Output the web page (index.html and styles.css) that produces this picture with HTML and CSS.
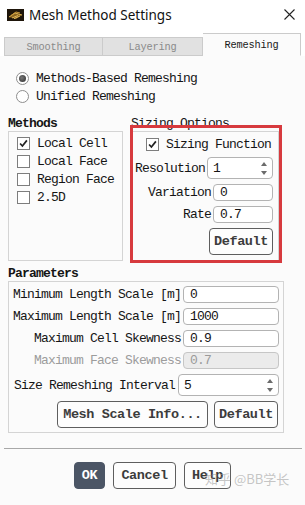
FILE: index.html
```html
<!DOCTYPE html>
<html>
<head>
<meta charset="utf-8">
<link rel="stylesheet" href="styles.css">
</head>
<body>
<div class="win">
  <header class="titlebar">
    <svg class="app-icon" viewBox="0 0 17 12">
      <rect width="17" height="12" fill="#1e150a"/>
      <path d="M2 8 L8 4 L15 6 L9 10 Z" fill="#8a6420"/>
      <path d="M2 8 L8 4 L15 6" fill="none" stroke="#e0b552" stroke-width="1"/>
      <path d="M4 6.5 L9 3 L13 4" fill="none" stroke="#c9973a" stroke-width="1"/>
      <path d="M5 9 L11 6.5 M7 9.7 L13 7" stroke="#f0c868" stroke-width="0.8"/>
    </svg>
    <span class="title">Mesh Method Settings</span>
    <svg class="close" viewBox="0 0 11 11"><path d="M0.5 0.5 L10.5 10.5 M10.5 0.5 L0.5 10.5" stroke="#222" stroke-width="1.1"/></svg>
  </header>
  <nav class="tabs">
    <div class="tab t1">Smoothing</div>
    <div class="tab t2">Layering</div>
    <div class="tab t3 active">Remeshing</div>
  </nav>
  <main class="panel">
    <div class="radios">
      <div class="opt"><span class="radio on"></span><span>Methods-Based Remeshing</span></div>
      <div class="opt"><span class="radio"></span><span>Unified Remeshing</span></div>
    </div>
    <div class="groups">
      <section class="group methods">
        <div class="group-label">Methods</div>
        <div class="box mbox">
          <div class="opt"><span class="check on"><svg viewBox="0 0 13 13"><path d="M2.5 6.5 L5.2 9.5 L10.5 2.8" fill="none" stroke="#222" stroke-width="2"/></svg></span><span>Local Cell</span></div>
          <div class="opt"><span class="check"></span><span>Local Face</span></div>
          <div class="opt"><span class="check"></span><span>Region Face</span></div>
          <div class="opt"><span class="check"></span><span>2.5D</span></div>
        </div>
      </section>
      <section class="group sizing">
        <div class="group-label normal">Sizing Options</div>
        <div class="box sbox">
          <div class="opt sf"><span class="check on"><svg viewBox="0 0 13 13"><path d="M2.5 6.5 L5.2 9.5 L10.5 2.8" fill="none" stroke="#222" stroke-width="2"/></svg></span><span>Sizing Function</span></div>
          <div class="field r-res"><span>Resolution</span><div class="spin w66"><span class="val">1</span><span class="arrows"><i class="up"></i><i class="dn"></i></span></div></div>
          <div class="field r-var"><span>Variation</span><div class="input w60">0</div></div>
          <div class="field r-rate"><span>Rate</span><div class="input w60">0.7</div></div>
          <div class="field r-btn"><button class="btn w64">Default</button></div>
        </div>
      </section>
    </div>
    <section class="params">
      <div class="group-label">Parameters</div>
      <div class="box pbox">
        <div class="field"><span>Minimum Length Scale [m]</span><div class="input w96">0</div></div>
        <div class="field"><span>Maximum Length Scale [m]</span><div class="input w96">1000</div></div>
        <div class="field"><span>Maximum Cell Skewness</span><div class="input w96">0.9</div></div>
        <div class="field disabled"><span>Maximum Face Skewness</span><div class="input w96">0.7</div></div>
        <div class="field spinrow"><span>Size Remeshing Interval</span><div class="spin w101"><span class="val">5</span><span class="arrows"><i class="up"></i><i class="dn"></i></span></div></div>
        <div class="field btnrow"><button class="btn w151">Mesh Scale Info...</button><button class="btn w64">Default</button></div>
      </div>
    </section>
  </main>
  <div class="sep"></div>
  <footer class="footer">
    <button class="btn ok">OK</button>
    <button class="btn cancel">Cancel</button>
    <button class="btn help">Help</button>
  </footer>
  <div class="highlight"></div>
  <div class="watermark">知乎 @BB学长</div>
</div>
</body>
</html>
```
FILE: styles.css
```css
* { box-sizing: border-box; }
html, body { margin: 0; padding: 0; }
body {
  width: 305px;
  height: 505px;
  overflow: hidden;
  background: #fbfbfb;
  font-family: "Liberation Mono", "DejaVu Sans Mono", monospace;
  font-size: 13px;
  letter-spacing: -0.8px;
  color: #151515;
}
.win { position: relative; width: 305px; height: 505px; }

.titlebar {
  height: 33px;
  display: flex;
  align-items: center;
  padding: 0 10px 4px 7px;
  background: #fff;
}
.app-icon { width: 17px; height: 12px; display: block; }
.title {
  flex: 1;
  margin-left: 5px;
  font-family: "Noto Sans", "Open Sans", sans-serif;
  font-size: 13.5px;
  letter-spacing: 0;
  color: #111;
}
.close { width: 11px; height: 11px; display: block; }

.tabs {
  height: 23px;
  display: flex;
  align-items: flex-end;
  padding: 0 4px;
  background: #fff;
}
.tab {
  height: 19px;
  border: 1px solid #cbcbcb;
  background: #e1e1e1;
  color: #8a8a8a;
  font-size: 10.3px;
  letter-spacing: -0.2px;
  display: flex;
  align-items: center;
  justify-content: center;
}
.t1 { width: 99px; }
.t2 { width: 100px; border-left: none; }
.t3 { width: 98px; }
.tab.active {
  height: 23px;
  background: #fbfbfb;
  color: #1a1a1a;
  border-bottom-color: #fbfbfb;
  border-left: none;
}

.panel { padding: 13px 0 0 8px; }
.radios { margin-left: 8px; }
.opt { height: 18px; display: flex; align-items: center; gap: 7px; }
.radio {
  width: 13px; height: 13px;
  border: 1px solid #8e8e8e;
  border-radius: 50%;
  background: #fff;
  display: flex; align-items: center; justify-content: center;
}
.radio.on::after {
  content: "";
  width: 7px; height: 7px;
  border-radius: 50%;
  background: radial-gradient(circle at 40% 40%, #777, #2c2c2c);
}
.check {
  width: 13px; height: 13px;
  border: 1px solid #7d7d7d;
  background: #fff;
  display: flex;
}
.check svg { width: 11px; height: 11px; display: block; }

.groups { display: flex; gap: 8px; margin-top: 12px; }
.group { display: flex; flex-direction: column; }
.group-label { height: 14px; line-height: 14px; font-weight: bold; }
.group-label.normal { font-weight: normal; }
.box { border: 1px solid #d4d4d4; flex: 1; }
.methods { width: 115px; }
.sizing { width: 148px; }
.mbox { padding: 2px 0 0 8px; }
.sbox { padding: 3px 5px 5px 0; display: flex; flex-direction: column; }
.sf { margin-left: 14px; }

.field {
  display: flex;
  justify-content: flex-end;
  align-items: center;
  gap: 2px;
  white-space: nowrap;
}
.r-res { margin-top: 4px; }
.r-var { margin-top: 5px; }
.r-rate { margin-top: 5px; }
.r-btn { margin-top: 5px; }

.input {
  height: 17px;
  border: 1px solid #b3b3b3;
  border-radius: 4px;
  background: #fff;
  padding-left: 6px;
  line-height: 15px;
}
.w60 { width: 60px; }
.w96 { width: 96px; }
.spin {
  height: 22px;
  border: 1px solid #b3b3b3;
  border-radius: 4px;
  background: #fff;
  display: flex;
  align-items: center;
  padding: 0 5px 0 5px;
}
.spin .val { flex: 1; }
.w66 { width: 66px; }
.w101 { width: 101px; }
.arrows { display: flex; flex-direction: column; gap: 5px; }
.arrows i { display: block; width: 0; height: 0; border-left: 3px solid transparent; border-right: 3px solid transparent; }
.arrows .up { border-bottom: 4px solid #6b6b6b; }
.arrows .dn { border-top: 4px solid #6b6b6b; }

.btn {
  height: 27px;
  border: 1px solid #5e5e5e;
  border-radius: 4px;
  background: #fdfdfd;
  font-family: "Liberation Mono", monospace;
  font-weight: bold;
  font-size: 13.5px;
  letter-spacing: -0.4px;
  color: #3c3c3c;
  padding: 0;
}
.w64 { width: 64px; }
.w151 { width: 151px; }

.params { margin-top: 6px; width: 276px; }
.pbox { padding: 4px 4px 4px 4px; display: flex; flex-direction: column; gap: 5px; }
.pbox .field { height: 17px; }
.pbox .spinrow { height: 22px; gap: 3px; }
.pbox .btnrow { height: 27px; gap: 6px; padding-right: 1px; }
.disabled { color: #9c9c9c; }
.disabled .input { background: #ebebeb; border-color: #c6c6c6; color: #9a9a9a; }

.sep { margin: 15px 3px 0 4px; height: 1px; background: #a8a8a8; }
.footer { display: flex; justify-content: center; gap: 8px; margin-top: 13px; }
.ok { width: 31px; background: #4b5565; border-color: #4b5565; color: #fff; }
.cancel { width: 63px; }
.help { width: 47px; }

.highlight {
  position: absolute;
  left: 130px;
  top: 125px;
  width: 152px;
  height: 138px;
  border: 3px solid #d73a3e;
}
.watermark {
  position: absolute;
  left: 205px;
  top: 469px;
  font-family: "Noto Sans CJK SC", "Noto Sans", sans-serif;
  font-size: 13px;
  letter-spacing: 0;
  color: rgba(150, 150, 150, 0.55);
}
```
